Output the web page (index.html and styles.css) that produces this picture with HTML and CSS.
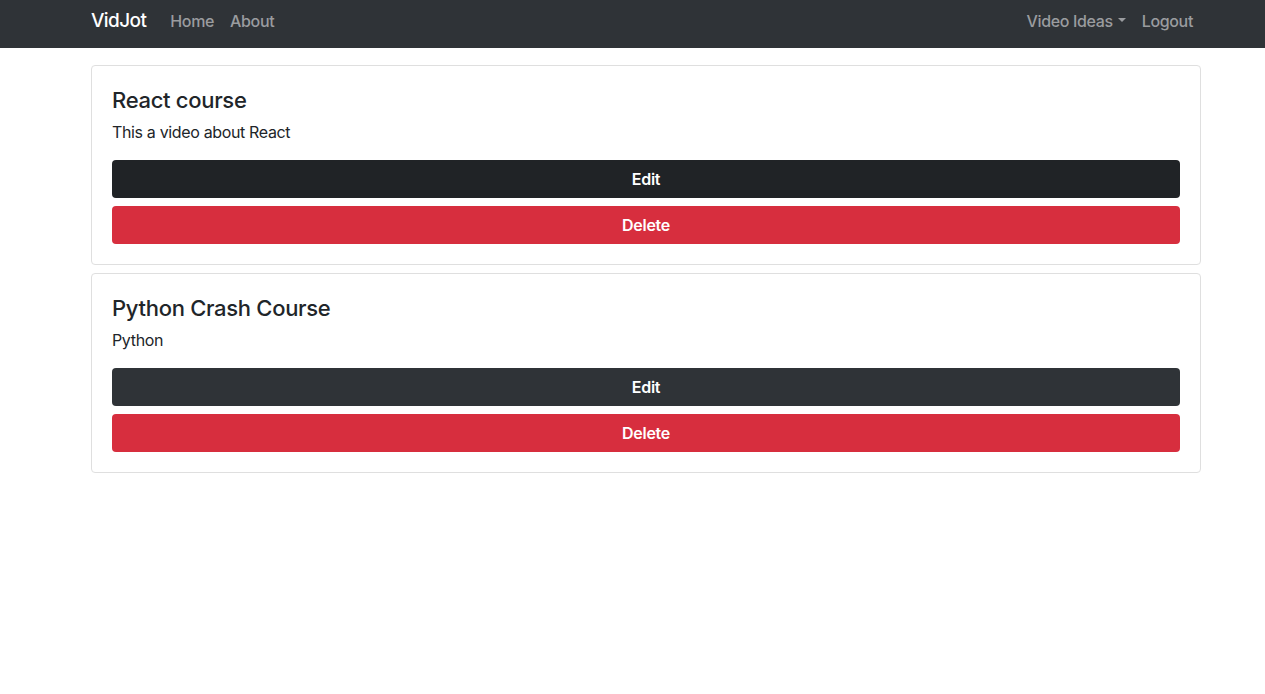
FILE: index.html
```html
<!DOCTYPE html>
<html lang="en">
<head>
<meta charset="utf-8">
<title>VidJot</title>
<link rel="stylesheet" href="styles.css">
</head>
<body>
<nav class="navbar">
  <div class="nav-inner">
    <a class="brand" href="#">VidJot</a>
    <ul class="nav-list">
      <li><a class="nav-link" href="#">Home</a></li>
      <li><a class="nav-link" href="#">About</a></li>
    </ul>
    <ul class="nav-list nav-right">
      <li><a class="nav-link dropdown" href="#">Video Ideas<span class="caret"></span></a></li>
      <li><a class="nav-link" href="#">Logout</a></li>
    </ul>
  </div>
</nav>
<main class="container">
  <div class="card">
    <h5 class="card-title">React course</h5>
    <p class="card-text">This a video about React</p>
    <a class="btn btn-dark btn-hover" href="#">Edit</a>
    <button class="btn btn-danger">Delete</button>
  </div>
  <div class="card">
    <h5 class="card-title">Python Crash Course</h5>
    <p class="card-text">Python</p>
    <a class="btn btn-dark" href="#">Edit</a>
    <button class="btn btn-danger">Delete</button>
  </div>
</main>
</body>
</html>
```

FILE: styles.css
```css
* { box-sizing: border-box; }
html, body { margin: 0; padding: 0; }
body {
  font-family: Inter, "Liberation Sans", sans-serif;
  font-size: 16px;
  line-height: 24px;
  color: #212529;
  background: #fff;
}
a { text-decoration: none; }

.navbar {
  background: #2f3337;
  height: 48px;
}
.nav-inner {
  display: flex;
  align-items: center;
  height: 42px;
  margin-left: 91px;
  width: 1110px;
}
.brand {
  color: #fff;
  font-size: 19px;
  font-weight: 500;
  letter-spacing: -0.6px;
  margin-right: 16px;
  line-height: 30px;
}
.nav-list {
  display: flex;
  list-style: none;
  margin: 0;
  padding: 0;
}
.nav-right { margin-left: auto; }
.nav-link {
  display: flex;
  align-items: center;
  padding: 8px;
  color: #9a9c9f;
  font-size: 16px;
  font-weight: 500;
  letter-spacing: -0.35px;
}
.caret {
  display: inline-block;
  margin-left: 5px;
  width: 0;
  height: 0;
  border-top: 4px solid #9a9c9f;
  border-left: 4px solid transparent;
  border-right: 4px solid transparent;
  transform: translateY(-1px);
}

.container {
  margin-left: 91px;
  width: 1110px;
  padding-top: 17px;
}
.card {
  display: flex;
  flex-direction: column;
  border: 1px solid #dfdfdf;
  border-radius: 4px;
  padding: 20px;
  margin-bottom: 8px;
}
.card-title {
  margin: 0 0 6px;
  font-size: 22px;
  line-height: 28px;
  font-weight: 500;
  letter-spacing: -0.3px;
}
.card-text {
  margin: 0 0 16px;
  letter-spacing: -0.35px;
}
.btn {
  display: flex;
  align-items: center;
  justify-content: center;
  height: 38px;
  border: 0;
  border-radius: 4px;
  color: #fff;
  font-family: inherit;
  font-size: 16px;
  font-weight: 600;
  letter-spacing: -0.3px;
  width: 100%;
  margin: 0;
}
.btn + .btn { margin-top: 8px; }
.btn-dark { background: #2f3337; }
.btn-hover { background: #202326; }
.btn-danger { background: #d72e3e; }
```
